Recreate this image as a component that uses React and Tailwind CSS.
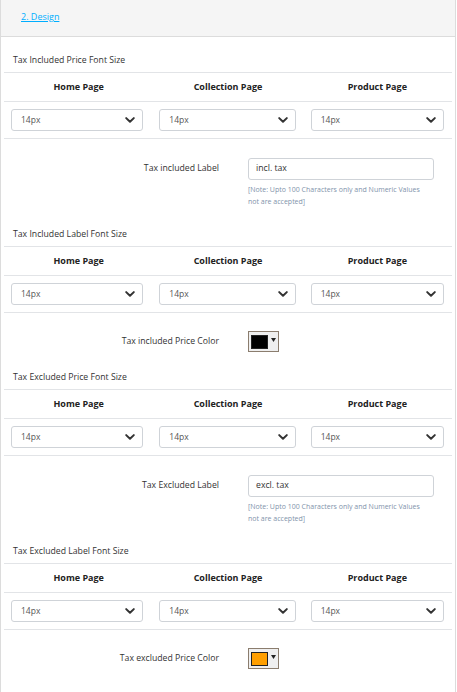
const PAGES = ["Home Page", "Collection Page", "Product Page"];
const PADS = ["pl-[7px] pr-[10px]", "pl-[6px] pr-[7px]", "pl-[8px] pr-[8px]"];

function Chevron() {
  return (
    <svg width="10" height="6" viewBox="0 0 10 6" className="shrink-0">
      <path d="M1.2 1.1 L5 4.8 L8.8 1.1" fill="none" stroke="#333" strokeWidth="2" strokeLinecap="round" strokeLinejoin="round" />
    </svg>
  );
}

function SizeSelect() {
  return (
    <div className="flex h-[22px] items-center justify-between rounded-[3px] border border-[#cfd3d8] bg-white pl-[9px] pr-[7px] text-[8.5px] text-[#555]">
      <span>14px</span>
      <Chevron />
    </div>
  );
}

function FontSizeBlock({ title }) {
  return (
    <div>
      <div className="pl-[12px] pb-[6px] text-[8.7px] leading-[12px] text-[#333]">{title}</div>
      <div className="mx-[3px] border-t border-[#e2e4e7]">
        <div className="grid h-[29px] grid-cols-3 items-center border-b border-[#e2e4e7]">
          {PAGES.map((p) => (
            <div key={p} className="text-center text-[9px] font-bold text-[#222]">
              {p}
            </div>
          ))}
        </div>
        <div className="grid h-[37px] grid-cols-3 items-center border-b border-[#e2e4e7]">
          {PADS.map((pad, i) => (
            <div key={i} className={pad}>
              <SizeSelect />
            </div>
          ))}
        </div>
      </div>
    </div>
  );
}

function LabelRow({ label, value }) {
  return (
    <div className="flex pt-[19px] pb-[20px]">
      <div className="flex h-[22px] w-[218px] items-center justify-end text-[8.7px] text-[#333]">{label}</div>
      <div className="ml-[29px] w-[186px]">
        <div className="flex h-[22px] items-center rounded-[3px] border border-[#cfd3d8] pl-[7px] text-[8.7px] text-[#333]">
          {value}
        </div>
        <div className="mt-[4px] text-[7px] leading-[12px] text-[#8193ab]">
          [Note: Upto 100 Characters only and Numeric Values
          <br />
          not are accepted]
        </div>
      </div>
    </div>
  );
}

function ColorRow({ label, color }) {
  return (
    <div className="flex pt-[18px] pb-[19px]">
      <div className="flex h-[21px] w-[218px] items-center justify-end text-[8.7px] text-[#333]">{label}</div>
      <div className="ml-[29px] flex h-[21px] w-[31px] items-center border border-[#8b7d6e] bg-[#efefef] pl-[2px]">
        <div className="h-[14px] w-[17px] border border-[#222]" style={{ background: color }} />
        <svg width="5" height="4" viewBox="0 0 5 4" className="ml-[3px] mb-[3px]">
          <path d="M0 0 L5 0 L2.5 4 Z" fill="#222" />
        </svg>
      </div>
    </div>
  );
}

export default function App() {
  return (
    <div className="w-[456px] min-h-[692px] border-x border-[#dcdcdc] bg-white" style={{ fontFamily: '"Open Sans", "Noto Sans", sans-serif' }}>
      <div className="flex h-[37px] items-center border-b border-[#dcdcdc] bg-[#f5f5f5] pl-[20px] pb-[3px]">
        <a href="#" className="text-[9px] text-[#00aeff] underline">
          2. Design
        </a>
      </div>
      <div className="pt-[17px]">
        <FontSizeBlock title="Tax Included Price Font Size" />
        <LabelRow label="Tax included Label" value="incl. tax" />
        <FontSizeBlock title="Tax Included Label Font Size" />
        <ColorRow label="Tax included Price Color" color="#000000" />
        <FontSizeBlock title="Tax Excluded Price Font Size" />
        <LabelRow label="Tax Excluded Label" value="excl. tax" />
        <FontSizeBlock title="Tax Excluded Label Font Size" />
        <ColorRow label="Tax excluded Price Color" color="#ff9f00" />
      </div>
    </div>
  );
}
